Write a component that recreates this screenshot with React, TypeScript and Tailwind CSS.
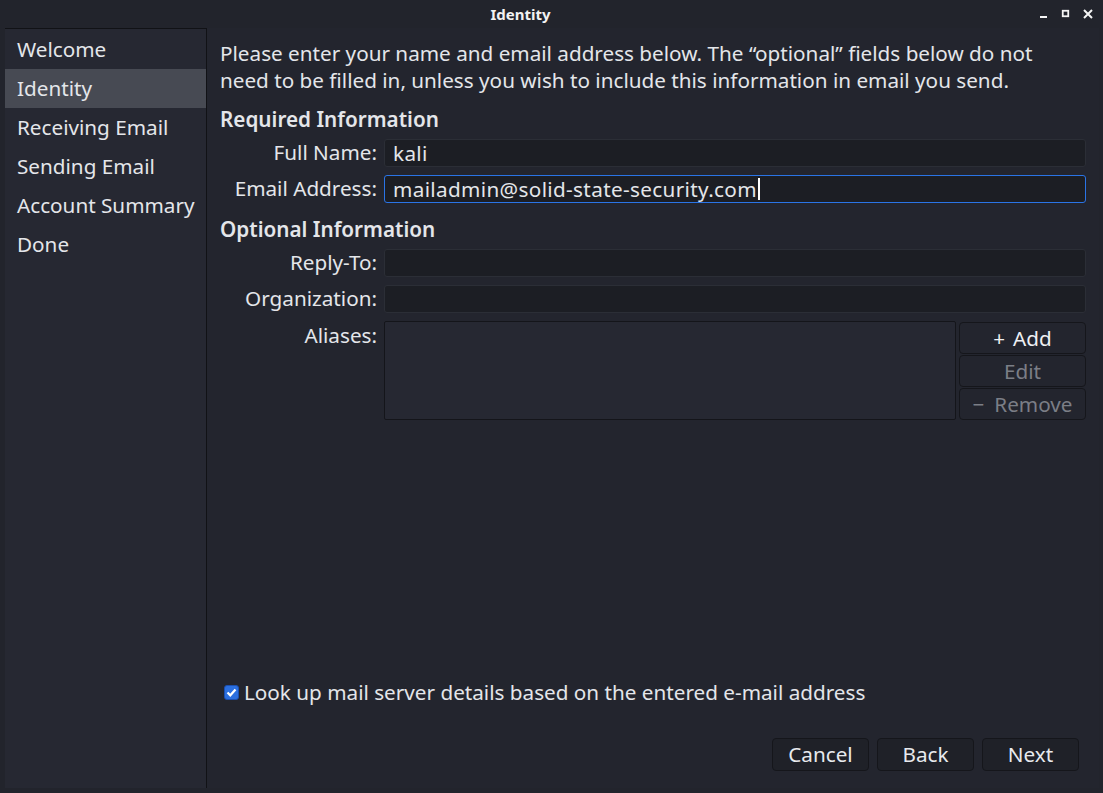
import React from 'react'

const font = { fontFamily: '"Noto Sans", "Open Sans", sans-serif' }

const steps = ['Welcome', 'Identity', 'Receiving Email', 'Sending Email', 'Account Summary', 'Done']

const Field = ({ label, value, focused }: { label: string; value?: string; focused?: boolean }) => (
  <div className="flex items-center h-[28px] mb-[8px]">
    <div className="w-[158px] text-right pr-[1px] whitespace-nowrap">{label}</div>
    <div
      className={
        'ml-[6px] flex-1 h-[28px] rounded-[3px] flex items-center px-[8px] bg-[#1c1e24] border ' +
        (focused ? 'border-[#2a74e6]' : 'border-[#2b2e36]')
      }
    >
      <span className="leading-none tracking-[0.35px]">{value}</span>
      {focused && <span className="w-[2px] h-[22px] bg-white ml-[1px]" />}
    </div>
  </div>
)

const SideBtn = ({ children, disabled }: { children: React.ReactNode; disabled?: boolean }) => (
  <button
    className={
      'h-[32px] w-full rounded-[4px] border border-[#15161b] bg-[#23252e] leading-none ' +
      (disabled ? 'text-[#7b7e86]' : 'text-[#eef0f3]')
    }
  >
    {children}
  </button>
)

const BottomBtn = ({ children }: { children: React.ReactNode }) => (
  <button className="w-[97px] h-[33px] rounded-[4px] border border-[#15161b] bg-[#1f2128] text-[#e8eaee] leading-none">
    {children}
  </button>
)

export default function App() {
  return (
    <div style={font} className="w-[1103px] h-[793px] bg-[#22242c] text-[#e4e6ea] text-[20.7px] flex flex-col overflow-hidden">
      {/* title bar */}
      <div className="h-[28px] relative flex items-center justify-center pr-[62px] shrink-0">
        <span className="text-[15px] font-bold text-[#f2f2f2]">Identity</span>
        <div className="absolute right-[10px] top-[9px] flex items-center gap-[12px]">
          <svg width="10" height="10" viewBox="0 0 10 10">
            <rect x="1" y="7" width="7" height="2" fill="#f5f5f5" />
          </svg>
          <svg width="10" height="10" viewBox="0 0 10 10">
            <rect x="1.75" y="1.75" width="5.5" height="5.5" fill="none" stroke="#f5f5f5" strokeWidth="1.8" />
          </svg>
          <svg width="10" height="10" viewBox="0 0 10 10">
            <path d="M1 1 L9 9 M9 1 L1 9" stroke="#f5f5f5" strokeWidth="2" />
          </svg>
        </div>
      </div>

      <div className="flex flex-1 pl-[5px] pr-[4px] pb-[5px] min-h-0">
        {/* sidebar */}
        <div className="w-[202px] shrink-0 bg-[#262832] border-t border-r border-[#111216] pt-[1px]">
          {steps.map((s) => (
            <div
              key={s}
              className={'h-[39px] flex items-center pl-[12px] whitespace-nowrap ' + (s === 'Identity' ? 'bg-[#474a53]' : '')}
            >
              {s}
            </div>
          ))}
        </div>

        {/* main */}
        <div className="flex-1 bg-[#23252e] pl-[13px] pr-[13px] pt-[12px] pb-[17px] flex flex-col">
          <p className="leading-[27px]">
            Please enter your name and email address below. The “optional” fields below do not need to be filled in, unless you wish to include this information in email you send.
          </p>

          <div className="font-semibold leading-[27px] mt-[12px] mb-[6px]">Required Information</div>
          <Field label="Full Name:" value="kali" />
          <Field label="Email Address:" value="mailadmin@solid-state-security.com" focused />

          <div className="font-semibold leading-[27px] mt-[5px] mb-[6px]">Optional Information</div>
          <Field label="Reply-To:" />
          <Field label="Organization:" />

          <div className="flex">
            <div className="w-[158px] text-right pr-[1px] leading-[27px] pt-[1px]">Aliases:</div>
            <div className="ml-[6px] flex-1 h-[99px] bg-[#262832] border border-[#14151a] rounded-[2px]" />
            <div className="w-[127px] ml-[3px] flex flex-col gap-[1px] pt-[1px]">
              <SideBtn>
                <span className="mr-[8px]">+</span>Add
              </SideBtn>
              <SideBtn disabled>Edit</SideBtn>
              <SideBtn disabled>
                <span className="mr-[10px]">−</span>Remove
              </SideBtn>
            </div>
          </div>

          <div className="flex-1" />

          <label className="flex items-center ml-[4px] gap-[5px] leading-[31px]">
            <span className="w-[15px] h-[15px] rounded-[3px] bg-[#2b6fdf] border border-[#1a4fb0] flex items-center justify-center">
              <svg width="11" height="11" viewBox="0 0 11 11">
                <path d="M1.5 5.5 L4.3 8.3 L9.5 2.5" fill="none" stroke="white" strokeWidth="2.2" />
              </svg>
            </span>
            <span>Look up mail server details based on the entered e-mail address</span>
          </label>

          <div className="flex justify-end gap-[8px] mt-[30px] pr-[7px]">
            <BottomBtn>Cancel</BottomBtn>
            <BottomBtn>Back</BottomBtn>
            <BottomBtn>Next</BottomBtn>
          </div>
        </div>
      </div>
    </div>
  )
}
